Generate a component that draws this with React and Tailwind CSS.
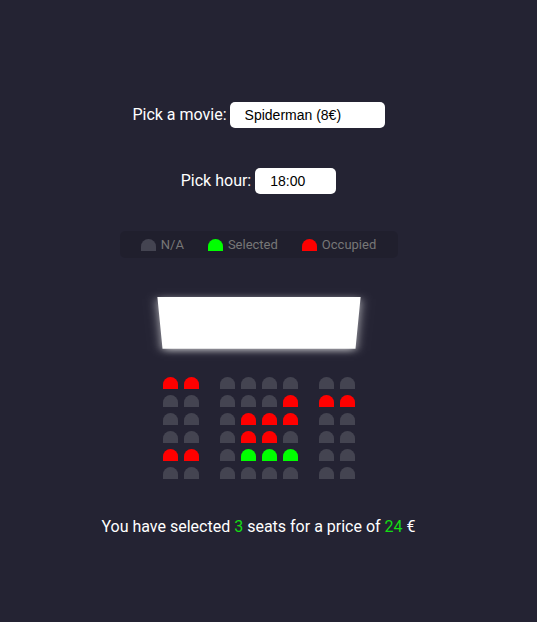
import React from "react";

const N = "n", R = "r", G = "g";
const rows = [
  [R, R, N, N, N, N, N, N],
  [N, N, N, N, N, R, R, R],
  [N, N, N, R, R, R, N, N],
  [N, N, N, R, R, N, N, N],
  [R, R, N, G, G, G, N, N],
  [N, N, N, N, N, N, N, N],
];

const colorClass = {
  n: "bg-[#444451]",
  r: "bg-[#ff0000]",
  g: "bg-[#00ff00]",
};

function Seat({ type, extra = "" }) {
  return (
    <div
      className={`w-[15px] h-[12px] rounded-t-[10px] ${colorClass[type]} ${extra}`}
    />
  );
}

export default function App() {
  return (
    <div className="min-h-[622px] w-full bg-[#242333] text-white font-['Roboto',sans-serif]">
      <div className="w-[517px] flex flex-col items-center">
        <div className="mt-[102px] flex items-center h-[26px]">
          <label className="text-[16px] leading-none">Pick a movie:</label>
          <select
            className="ml-[3px] w-[155px] h-[26px] bg-white text-black rounded-[5px] pl-[15px] text-[14px] font-['Liberation_Sans',Arial,sans-serif] appearance-none outline-none border-0"
            defaultValue="8"
          >
            <option value="8">Spiderman (8€)</option>
          </select>
        </div>
        <div className="mt-[40px] flex items-center h-[26px]">
          <label className="text-[16px] leading-none">Pick hour:</label>
          <select
            className="ml-[4px] w-[81px] h-[26px] bg-white text-black rounded-[5px] pl-[15px] text-[14px] font-['Liberation_Sans',Arial,sans-serif] appearance-none outline-none border-0"
            defaultValue="18"
          >
            <option value="18">18:00</option>
          </select>
        </div>

        <ul className="mt-[37px] h-[27px] w-[278px] flex items-center justify-center gap-[24px] rounded-[5px] bg-[rgba(0,0,0,0.1)] text-[13px] text-[#777777]">
          <li className="flex items-center">
            <Seat type="n" />
            <span className="ml-[5px]">N/A</span>
          </li>
          <li className="flex items-center">
            <Seat type="g" />
            <span className="ml-[5px]">Selected</span>
          </li>
          <li className="flex items-center">
            <Seat type="r" />
            <span className="ml-[5px]">Occupied</span>
          </li>
        </ul>

        <div className="mt-[29px] w-[198px] h-[73px] bg-white shadow-[0_3px_10px_rgba(255,255,255,0.7)] [transform:perspective(1000px)_rotateX(-45deg)]" />

        <div className="mt-[14px] flex flex-col">
          {rows.map((row, i) => (
            <div key={i} className="flex">
              {row.map((t, j) => {
                let m = "m-[3px]";
                if (j === 1) m = "my-[3px] ml-[3px] mr-[18px]";
                if (j === 6) m = "my-[3px] mr-[3px] ml-[18px]";
                return <Seat key={j} type={t} extra={m} />;
              })}
            </div>
          ))}
        </div>

        <p className="mt-[33px] text-[16px] leading-[24px]">
          You have selected <span className="text-[#14dd14]">3</span> seats for a price of{" "}
          <span className="text-[#14dd14]">24</span> €
        </p>
      </div>
    </div>
  );
}
